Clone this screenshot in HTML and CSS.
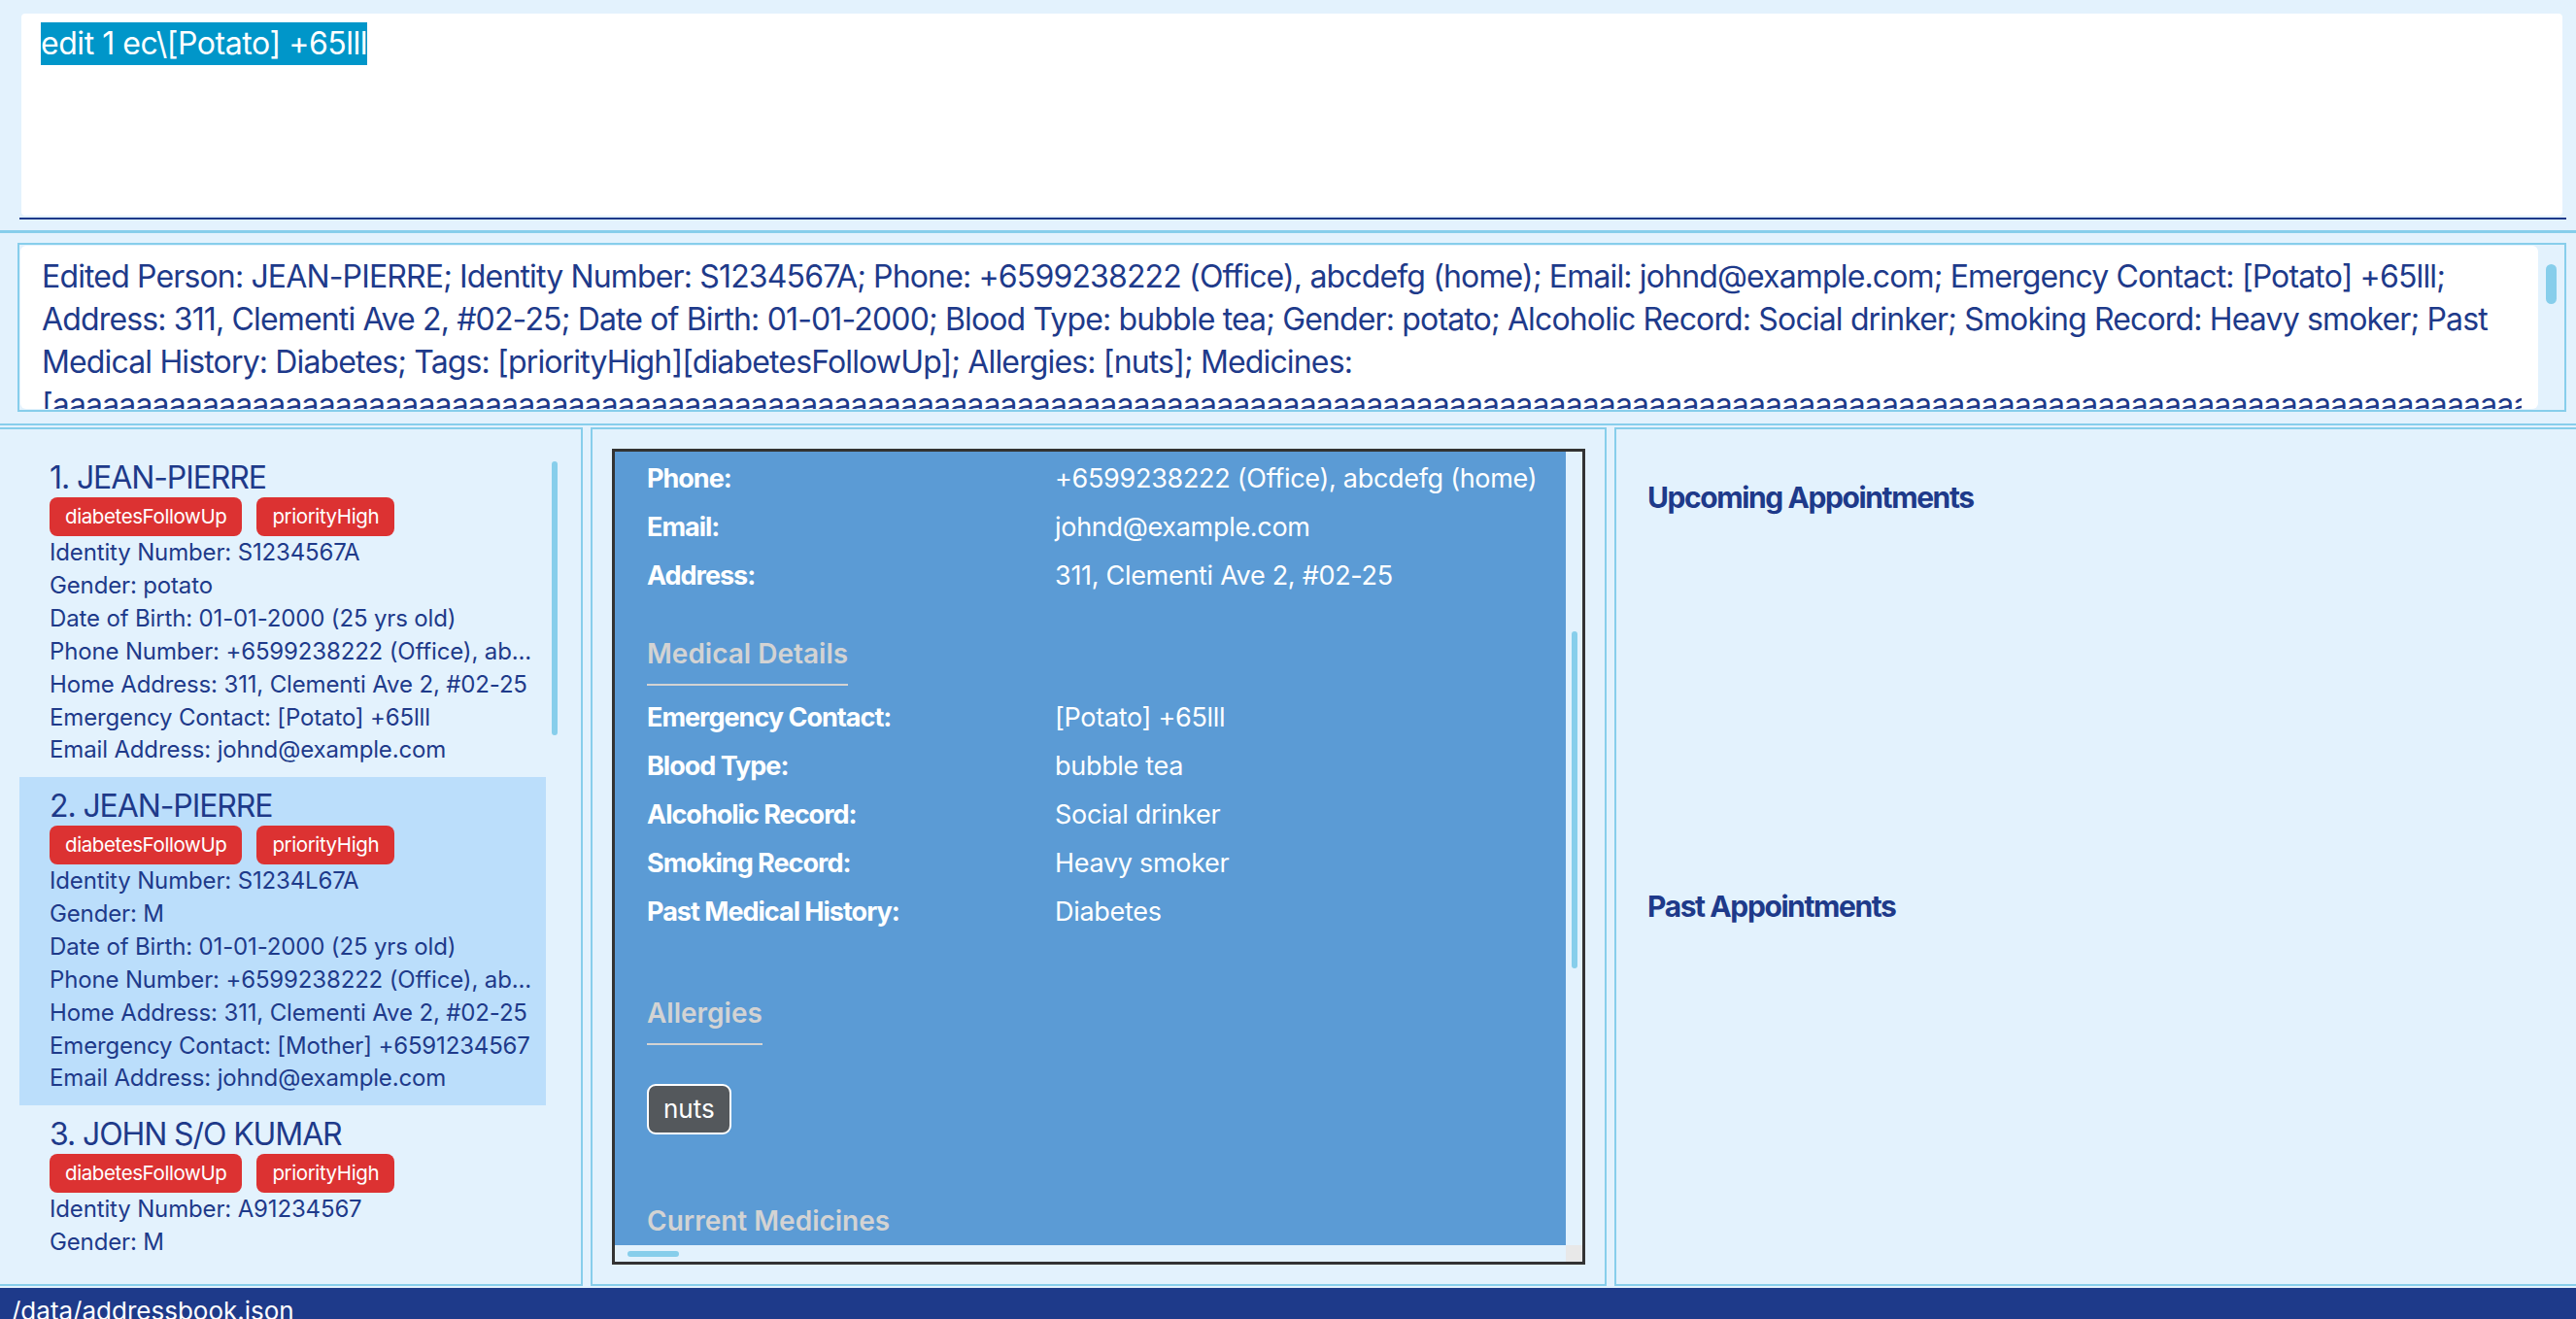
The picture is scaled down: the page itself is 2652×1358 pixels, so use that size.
FILE: index.html
```html
<!DOCTYPE html>
<html lang="en">
<head>
<meta charset="utf-8">
<title>Address Book</title>
<link rel="stylesheet" href="styles.css">
</head>
<body>
<div class="app">
  <div class="command-wrap">
    <div class="command-field">
      <div class="command-inner"><span class="command-sel">edit 1 ec\[Potato] +65lll</span></div>
    </div>
  </div>
  <div class="divider"></div>
  <div class="result-box">
    <div class="result-text">
      <div class="result-line">Edited Person: JEAN-PIERRE; Identity Number: S1234567A; Phone: +6599238222 (Office), abcdefg (home); Email: johnd@example.com; Emergency Contact: [Potato] +65lll;</div>
      <div class="result-line">Address: 311, Clementi Ave 2, #02-25; Date of Birth: 01-01-2000; Blood Type: bubble tea; Gender: potato; Alcoholic Record: Social drinker; Smoking Record: Heavy smoker; Past</div>
      <div class="result-line">Medical History: Diabetes; Tags: [priorityHigh][diabetesFollowUp]; Allergies: [nuts]; Medicines:</div>
      <div class="result-line">[aaaaaaaaaaaaaaaaaaaaaaaaaaaaaaaaaaaaaaaaaaaaaaaaaaaaaaaaaaaaaaaaaaaaaaaaaaaaaaaaaaaaaaaaaaaaaaaaaaaaaaaaaaaaaaaaaaaaaaaaaaaaaaaaaaaaaaaaaaaaaaaaaaaaaaaaaaaaa</div>
    </div>
    <div class="result-scroll"><div class="result-thumb"></div></div>
  </div>
  <div class="split-line"></div>
  <div class="panels">
    <section class="panel list-panel">
      <div class="list-view">
        <div class="person-list">
          <div class="person-card">
            <div class="person-name">1. JEAN-PIERRE</div>
            <div class="tags"><span class="tag">diabetesFollowUp</span><span class="tag">priorityHigh</span></div>
            <div class="person-field">Identity Number: S1234567A</div>
            <div class="person-field">Gender: potato</div>
            <div class="person-field">Date of Birth: 01-01-2000 (25 yrs old)</div>
            <div class="person-field">Phone Number: +6599238222 (Office), ab...</div>
            <div class="person-field">Home Address: 311, Clementi Ave 2, #02-25</div>
            <div class="person-field">Emergency Contact: [Potato] +65lll</div>
            <div class="person-field">Email Address: johnd@example.com</div>
          </div>
          <div class="person-card selected">
            <div class="person-name">2. JEAN-PIERRE</div>
            <div class="tags"><span class="tag">diabetesFollowUp</span><span class="tag">priorityHigh</span></div>
            <div class="person-field">Identity Number: S1234L67A</div>
            <div class="person-field">Gender: M</div>
            <div class="person-field">Date of Birth: 01-01-2000 (25 yrs old)</div>
            <div class="person-field">Phone Number: +6599238222 (Office), ab...</div>
            <div class="person-field">Home Address: 311, Clementi Ave 2, #02-25</div>
            <div class="person-field">Emergency Contact: [Mother] +6591234567</div>
            <div class="person-field">Email Address: johnd@example.com</div>
          </div>
          <div class="person-card">
            <div class="person-name">3. JOHN S/O KUMAR</div>
            <div class="tags"><span class="tag">diabetesFollowUp</span><span class="tag">priorityHigh</span></div>
            <div class="person-field">Identity Number: A91234567</div>
            <div class="person-field">Gender: M</div>
          </div>
        </div>
        <div class="list-scroll"><div class="list-thumb"></div></div>
      </div>
    </section>
    <section class="panel detail-panel">
      <div class="detail-box">
        <div class="detail-content">
          <div class="detail-row"><span class="detail-label">Phone:</span><span class="detail-value">+6599238222 (Office), abcdefg (home)</span></div>
          <div class="detail-row"><span class="detail-label">Email:</span><span class="detail-value">johnd@example.com</span></div>
          <div class="detail-row"><span class="detail-label">Address:</span><span class="detail-value">311, Clementi Ave 2, #02-25</span></div>
          <h3 class="detail-heading medical">Medical Details</h3>
          <div class="detail-rows">
            <div class="detail-row"><span class="detail-label">Emergency Contact:</span><span class="detail-value">[Potato] +65lll</span></div>
            <div class="detail-row"><span class="detail-label">Blood Type:</span><span class="detail-value">bubble tea</span></div>
            <div class="detail-row"><span class="detail-label">Alcoholic Record:</span><span class="detail-value">Social drinker</span></div>
            <div class="detail-row"><span class="detail-label">Smoking Record:</span><span class="detail-value">Heavy smoker</span></div>
            <div class="detail-row"><span class="detail-label">Past Medical History:</span><span class="detail-value">Diabetes</span></div>
          </div>
          <h3 class="detail-heading allergies">Allergies</h3>
          <div class="chips"><span class="chip">nuts</span></div>
          <h3 class="detail-heading medicines">Current Medicines</h3>
        </div>
        <div class="vscroll"><div class="vthumb"></div></div>
        <div class="hscroll"><div class="hthumb"></div></div>
        <div class="scroll-corner"></div>
      </div>
    </section>
    <section class="panel appt-panel">
      <h2 class="appt-title">Upcoming Appointments</h2>
      <div class="appt-list"></div>
      <h2 class="appt-title">Past Appointments</h2>
    </section>
  </div>
  <div class="status-bar">/data/addressbook.json</div>
</div>
</body>
</html>
```

FILE: styles.css
```css
* { box-sizing: border-box; }

html, body {
  margin: 0;
  padding: 0;
}

body {
  width: 2652px;
  height: 1358px;
  overflow: hidden;
  background: #e3f2fd;
  font-family: Inter, "Noto Sans", "Liberation Sans", sans-serif;
  color: #1e3a8a;
}

.app {
  display: flex;
  flex-direction: column;
  height: 1358px;
}

/* command box */
.command-wrap {
  padding: 14px 10px 0 20px;
}

.command-field {
  padding: 0 4px 2px 2px;
  border-bottom: 2px solid #1e3a8a;
}

.command-inner {
  height: 208px;
  background: #ffffff;
  border-radius: 4px;
  padding: 9px 0 0 20px;
}

.command-sel {
  display: inline-block;
  background: #0096c9;
  color: #ffffff;
  font-size: 32px;
  line-height: 44px;
  letter-spacing: -0.45px;
  white-space: pre;
}

.divider {
  margin-top: 11px;
  height: 3px;
  background: #87ceeb;
}

/* result box */
.result-box {
  margin: 10px 10px 0 18px;
  height: 174px;
  border: 2px solid #87ceeb;
  display: flex;
  background: #e3f2fd;
}

.result-text {
  flex: 1;
  min-width: 0;
  margin: 1px 0 1px 1px;
  background: #ffffff;
  border-radius: 6px;
  padding: 10px 17px 0 22px;
  overflow: hidden;
}

.result-line {
  font-size: 32px;
  line-height: 44px;
  white-space: pre;
  overflow: hidden;
  letter-spacing: -0.85px;
}

.result-scroll {
  width: 27px;
  padding: 20px 0 0 8px;
}

.result-thumb {
  width: 11px;
  height: 41px;
  border-radius: 6px;
  background: #87ceeb;
}

.split-line {
  margin-top: 12px;
  height: 2px;
  background: #87ceeb;
}

/* panels */
.panels {
  display: flex;
  gap: 8px;
  margin: 2px -2px 0 -2px;
  height: 884px;
}

.panel {
  border: 2px solid #87ceeb;
  background: #e3f2fd;
  overflow: hidden;
}

.list-panel {
  width: 602px;
  flex: none;
  padding: 20px 0 20px 20px;
}

.detail-panel {
  width: 1046px;
  flex: none;
  padding: 20px;
}

.appt-panel {
  flex: 1;
  padding: 52px 32px 0;
}

/* person list */
.list-view {
  display: flex;
  height: 100%;
  overflow: hidden;
}

.person-list {
  width: 542px;
  flex: none;
}

.person-card {
  height: 338px;
  padding: 11px 0 10px 31px;
  overflow: hidden;
}

.person-card.selected {
  background: #bbdefb;
}

.person-name {
  font-size: 32px;
  line-height: 38px;
  letter-spacing: -1.1px;
  white-space: nowrap;
}

.tags {
  display: flex;
  gap: 15px;
  margin-top: 1px;
  height: 40px;
}

.tag {
  display: inline-block;
  height: 40px;
  line-height: 40px;
  padding: 0 16px;
  border-radius: 8px;
  background: #dc3232;
  color: #ffffff;
  font-size: 20.5px;
  letter-spacing: -0.4px;
}

.person-field {
  font-size: 24px;
  line-height: 33.9px;
  letter-spacing: -0.15px;
  white-space: nowrap;
}

.list-scroll {
  width: 6px;
  margin-left: 6px;
  padding-top: 13px;
}

.list-thumb {
  width: 6px;
  height: 282px;
  border-radius: 3px;
  background: #87ceeb;
}

/* detail box */
.detail-box {
  height: 100%;
  border: 3px solid #333333;
  display: grid;
  grid-template-columns: 1fr 17px;
  grid-template-rows: 1fr 17px;
}

.detail-content {
  background: #5b9bd5;
  color: #ffffff;
  padding: 3px 0 0 33px;
  overflow: hidden;
  min-height: 0;
}

.detail-row {
  display: grid;
  grid-template-columns: 420px 1fr;
  font-size: 27px;
  line-height: 50px;
  white-space: nowrap;
}

.detail-label {
  font-weight: 700;
  letter-spacing: -1px;
}

.detail-value {
  letter-spacing: -0.3px;
}

.detail-heading {
  width: fit-content;
  margin: 0;
  font-size: 28px;
  font-weight: 600;
  line-height: 34px;
  color: #d3d3d3;
  padding-bottom: 14px;
  border-bottom: 2px solid #d3d3d3;
}

.detail-heading.medical {
  margin-top: 38px;
}

.detail-rows {
  margin-top: 8px;
}

.detail-heading.allergies {
  margin-top: 62px;
}

.chips {
  margin-top: 40px;
  display: flex;
}

.chip {
  display: inline-block;
  background: #54585c;
  border: 2px solid #ffffff;
  border-radius: 9px;
  font-size: 26px;
  line-height: 48px;
  padding: 0 15px;
  color: #ffffff;
}

.detail-heading.medicines {
  margin-top: 72px;
}

.vscroll {
  background: #e3f2fd;
  padding: 185px 0 0 6px;
}

.vthumb {
  width: 6px;
  height: 347px;
  border-radius: 3px;
  background: #87ceeb;
}

.hscroll {
  background: #e3f2fd;
  padding: 6px 0 0 13px;
}

.hthumb {
  width: 53px;
  height: 6px;
  border-radius: 3px;
  background: #87ceeb;
}

.scroll-corner {
  background: #e8e8e8;
}

/* appointments */
.appt-title {
  margin: 0;
  font-size: 30px;
  font-weight: 700;
  line-height: 36px;
  color: #1e3a8a;
  letter-spacing: -1.4px;
}

.appt-list {
  height: 385px;
}

/* status bar */
.status-bar {
  margin-top: 2px;
  height: 32px;
  overflow: hidden;
  background: #1e3a8a;
  color: #ffffff;
  font-size: 26px;
  line-height: 32px;
  padding: 8px 12px 0;
  white-space: nowrap;
}
```
